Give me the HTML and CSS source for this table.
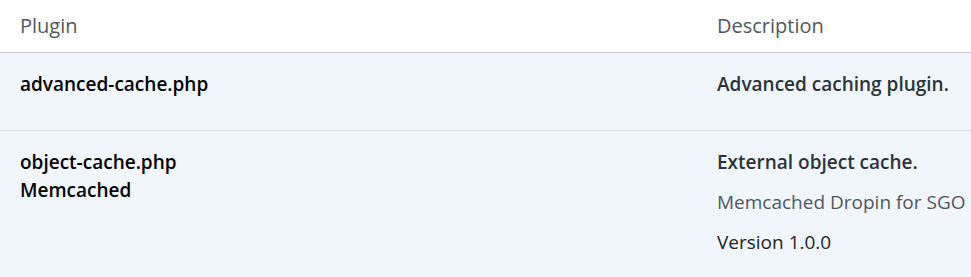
FILE: index.html
```html
<!DOCTYPE html>
<html lang="en">
<head>
    <meta charset="UTF-8">
    <meta name="viewport" content="width=device-width, initial-scale=1.0">
    <title>Drop-ins</title>
    <link rel="stylesheet" href="styles.css">
</head>
<body>
    <table class="plugins">
        <thead>
            <tr>
                <th class="col-name">Plugin</th>
                <th class="col-desc">Description</th>
            </tr>
        </thead>
        <tbody>
            <tr class="active">
                <td class="plugin-title"><strong>advanced-cache.php</strong></td>
                <td class="plugin-description">
                    <p><strong>Advanced caching plugin.</strong></p>
                </td>
            </tr>
            <tr class="active">
                <td class="plugin-title"><strong>object-cache.php</strong><br><strong>Memcached</strong></td>
                <td class="plugin-description">
                    <p><strong>External object cache.</strong></p>
                    <p class="muted">Memcached Dropin for SGO</p>
                    <p>Version 1.0.0</p>
                </td>
            </tr>
        </tbody>
    </table>
</body>
</html>
```

FILE: styles.css
```css
body {
    margin: 0;
    background: #fff;
    font-family: "Open Sans", "Noto Sans", sans-serif;
    font-size: 19px;
    line-height: 28px;
    color: #1d2327;
}
.plugins {
    width: 100%;
    border-collapse: collapse;
    table-layout: fixed;
}
.plugins th,
.plugins td {
    text-align: left;
    vertical-align: top;
    padding: 12px 0 12px 20px;
}
.plugins th {
    font-weight: 400;
    font-size: 20px;
    color: #50575e;
    border-bottom: 1px solid #c3c4c7;
}
.col-name {
    width: 677px;
}
.plugins tr.active td {
    background: #f0f6fc;
    border-bottom: 1px solid #dcdcde;
    padding: 17px 0 32px 20px;
}
.plugin-title strong {
    font-weight: 600;
    color: #000;
}
.plugin-description p {
    margin: 0 0 12px;
    white-space: nowrap;
}
.plugin-description p:last-child {
    margin-bottom: 0;
}
.plugin-description strong {
    font-weight: 600;
    color: #2c3338;
}
.plugin-description .muted {
    color: #50575e;
}
```
